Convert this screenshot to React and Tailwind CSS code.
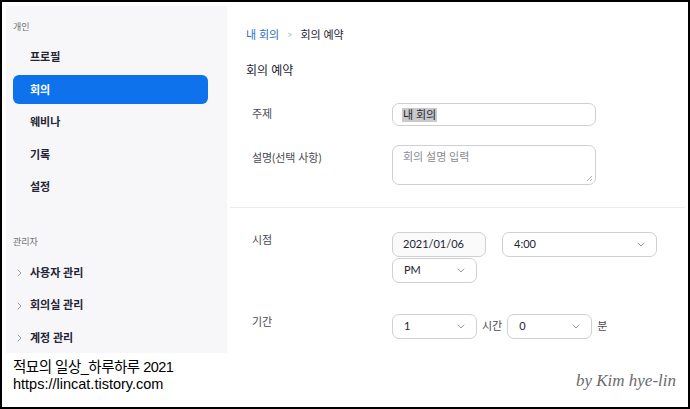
import React from "react";

const KR = { fontFamily: "Lato, 'Noto Sans CJK KR', sans-serif" };

function Chevron({ className = "" }) {
  return (
    <svg width="8" height="5" viewBox="0 0 8 5" className={className} fill="none">
      <path d="M1 1l3 3 3-3" stroke="#9a9aa3" strokeWidth="1" strokeLinecap="round" strokeLinejoin="round" />
    </svg>
  );
}

function ChevronRight() {
  return (
    <svg width="5" height="8" viewBox="0 0 5 8" fill="none">
      <path d="M1 1l3 3-3 3" stroke="#9a9aa3" strokeWidth="1" strokeLinecap="round" strokeLinejoin="round" />
    </svg>
  );
}

function Select({ value, w }) {
  return (
    <div
      className={`${w} h-[25px] flex items-center justify-between pl-[11px] pr-[11px] border border-[#cfcfd4] rounded-[7px] bg-white text-[11px] text-[#232333]`}
    >
      <span>{value}</span>
      <Chevron />
    </div>
  );
}

export default function App() {
  const navItems = ["프로필", "회의", "웨비나", "기록", "설정"];
  const adminItems = ["사용자 관리", "회의실 관리", "계정 관리"];
  return (
    <div className="w-[690px] h-[409px] border-2 border-black bg-white relative flex overflow-hidden" style={KR}>
      {/* left column */}
      <div className="w-[225px] pl-[4px] pt-[4px] flex flex-col">
        <div className="w-[221px] h-[347px] bg-[#f7f7fa] flex flex-col">
          <div className="mt-[15px] h-[12px] leading-[12px] pl-[7px] text-[9px] text-[#707070]">개인</div>
          <div className="mt-[8px] flex flex-col">
            {navItems.map((item) => {
              const active = item === "회의";
              return (
                <div key={item} className="h-[32.5px] flex items-center">
                  {active ? (
                    <div className="ml-[7px] w-[195px] h-[29px] rounded-[6px] bg-[#0e72ed] flex items-center pl-[17px] text-[11px] font-bold text-white">
                      {item}
                    </div>
                  ) : (
                    <div className="pl-[24px] text-[11px] font-bold text-[#232333]">{item}</div>
                  )}
                </div>
              );
            })}
          </div>
          <div className="mt-[32.5px] h-[12px] leading-[12px] pl-[7px] text-[9px] text-[#707070]">관리자</div>
          <div className="mt-[8.75px] flex flex-col">
            {adminItems.map((item) => (
              <div key={item} className="h-[32.5px] flex items-center">
                <div className="w-[24px] pl-[11px] flex items-center">
                  <ChevronRight />
                </div>
                <div className="text-[11px] font-bold text-[#232333]">{item}</div>
              </div>
            ))}
          </div>
        </div>
        <div
          className="pl-[7px] mt-[6px] text-[14.5px] leading-[16.5px] text-black"
          style={{ fontFamily: "'Liberation Sans', 'Noto Sans CJK KR', sans-serif" }}
        >
          <div className="tracking-[-0.5px]">적묘의 일상_하루하루 2021</div>
          <div>https://lincat.tistory.com</div>
        </div>
      </div>

      {/* main column */}
      <div className="flex-1 flex flex-col pt-[25px]">
        <div className="pl-[19px] h-[16px] flex items-center text-[11px]">
          <span className="text-[#2d6fc2]">내 회의</span>
          <span className="mx-[8px] text-[#b0b0b8] text-[9px]">&gt;</span>
          <span className="text-[#232333]">회의 예약</span>
        </div>
        <div className="pl-[19px] mt-[20px] h-[16px] flex items-center text-[12px] text-[#232333]">회의 예약</div>

        {/* 주제 */}
        <div className="mt-[24px] pl-[25px] flex items-center">
          <div className="w-[140px] text-[11px] text-[#4a4a55]">주제</div>
          <div className="w-[204px] h-[23px] border border-[#cfcfd4] rounded-[7px] flex items-center pl-[9px] text-[11px]">
            <span className="bg-[#c9c9c9] text-[#232333] px-[1px] leading-[14px]">내 회의</span>
          </div>
        </div>

        {/* 설명 */}
        <div className="mt-[19px] pl-[25px] flex items-start">
          <div className="w-[140px] pt-[5px] leading-[16px] text-[11px] text-[#4a4a55]">설명(선택 사항)</div>
          <div className="relative w-[204px] h-[40px] border border-[#cfcfd4] rounded-[7px] pl-[10px] pt-[3px] text-[11px] text-[#8a8a92]">
            회의 설명 입력
            <svg width="7" height="7" viewBox="0 0 7 7" className="absolute right-[2px] bottom-[2px]">
              <path d="M6 1L1 6M6 4L4 6" stroke="#9a9a9a" strokeWidth="0.8" />
            </svg>
          </div>
        </div>

        <div className="mt-[22px] ml-[3px] mr-[3px] h-px bg-[#ececf0]" />

        {/* 시점 */}
        <div className="mt-[24px] pl-[25px] flex items-start">
          <div className="w-[140px] h-[16px] leading-[16px] text-[11px] text-[#4a4a55]">시점</div>
          <div className="flex flex-col gap-[1px]">
            <div className="flex gap-[16px]">
              <div className="w-[94px] h-[25px] border border-[#cfcfd4] rounded-[7px] bg-[#fafafa] flex items-center pl-[10px] text-[11px] text-[#232333]">
                2021/01/06
              </div>
              <Select value="4:00" w="w-[155px]" />
            </div>
            <Select value="PM" w="w-[85px]" />
          </div>
        </div>

        {/* 기간 */}
        <div className="mt-[31px] pl-[25px] flex items-start">
          <div className="w-[140px] h-[16px] leading-[16px] text-[11px] text-[#4a4a55]">기간</div>
          <div className="flex items-center">
            <Select value="1" w="w-[85px]" />
            <span className="mx-[5px] text-[11px] text-[#4a4a55]">시간</span>
            <Select value="0" w="w-[85px]" />
            <span className="ml-[5px] text-[11px] text-[#4a4a55]">분</span>
          </div>
        </div>
      </div>

      <div
        className="absolute right-[12px] bottom-[14px] text-[17px] italic text-[#6b6b6b]"
        style={{ fontFamily: "'Liberation Serif', serif" }}
      >
        by Kim hye-lin
      </div>
    </div>
  );
}
